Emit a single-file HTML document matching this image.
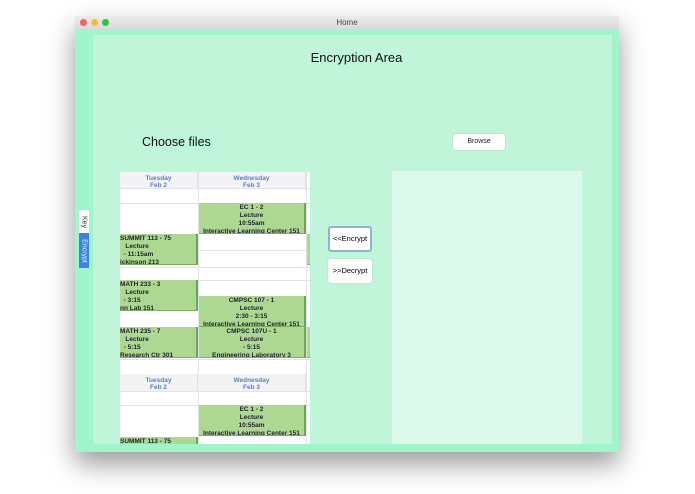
<!DOCTYPE html>
<html><head><style>
*{margin:0;padding:0;box-sizing:border-box}
body{width:695px;height:494px;background:#fff;position:relative;overflow:hidden;font-family:"Liberation Sans",sans-serif}
.a{position:absolute}
.ev{position:absolute;background:#acd891;border-right:2px solid #6aa84f;border-bottom:1px solid #7bb05f;font-size:6.5px;font-weight:bold;color:#223;text-align:center;line-height:8px;padding-top:1px;overflow:hidden;white-space:nowrap}
.hd{position:absolute;background:#f3f3f5;color:#5b7fc0;font-size:6.5px;font-weight:bold;text-align:center;line-height:7px;padding-top:3px;border-right:1px solid #dde}
.ln{position:absolute;height:1px;background:#e2e2ea}
.rot{position:absolute;left:50%;top:50%;transform:translate(-50%,-50%) rotate(90deg);font-size:7px;white-space:nowrap}
</style></head><body>
<div class="a" style="left:75px;top:16px;width:544px;height:436px;box-shadow:0 12px 25px rgba(0,0,0,.4);background:#a0f5cc"></div>
<div class="a" style="left:75px;top:16px;width:544px;height:14px;background:linear-gradient(#ececec,#d8d8d8);font-size:8px;color:#444;text-align:center;line-height:14px">Home</div>
<div class="a" style="left:80px;top:19px;width:7px;height:7px;border-radius:50%;background:#fc5f57"></div>
<div class="a" style="left:91px;top:19px;width:7px;height:7px;border-radius:50%;background:#fdbc2e"></div>
<div class="a" style="left:102px;top:19px;width:7px;height:7px;border-radius:50%;background:#28c840"></div>
<div class="a" style="left:93px;top:35px;width:519px;height:409px;background:#c0f5da"></div>
<div class="a" style="left:79px;top:210px;width:10px;height:23px;background:#fff;border-radius:2px 2px 0 0"><div class="rot" style="color:#333">Key</div></div>
<div class="a" style="left:79px;top:233px;width:10px;height:35px;background:#3b82e8"><div class="rot" style="color:#e8f0ff">Encrypt</div></div>
<div class="a" style="left:93px;top:50px;width:527px;text-align:center;font-size:13px;color:#111">Encryption Area</div>
<div class="a" style="left:142px;top:135px;font-size:12.5px;color:#111">Choose files</div>
<div class="a" style="left:453px;top:134px;width:52px;height:16px;background:#fff;border-radius:3px;box-shadow:0 0 1px #999;font-size:7px;text-align:center;line-height:16px;color:#222">Browse</div>
<div class="a" style="left:392px;top:171px;width:190px;height:273px;background:#dcf8ea"></div>
<div class="a" style="left:328px;top:226px;width:44px;height:26px;background:#fff;border:2px solid #8fb0d8;border-radius:3px;font-size:7.5px;text-align:center;line-height:22px">&lt;&lt;Encrypt</div>
<div class="a" style="left:328px;top:259px;width:44px;height:24px;background:#fff;border-radius:3px;box-shadow:0 0 1px #aaa;font-size:7.5px;text-align:center;line-height:24px">&gt;&gt;Decrypt</div>
<div class="a" style="left:120px;top:172px;width:190px;height:272px;background:#fff;overflow:hidden">
<div class="hd" style="left:0;top:0;width:78px;height:16px">Tuesday<br>Feb 2</div>
<div class="hd" style="left:78px;top:0;width:108px;height:16px">Wednesday<br>Feb 3</div>
<div class="ln" style="left:0;top:16px;width:190px"></div>
<div class="ln" style="left:0;top:31px;width:190px"></div>
<div class="ln" style="left:0;top:78px;width:190px"></div>
<div class="ln" style="left:0;top:95px;width:190px"></div>
<div class="ln" style="left:0;top:108px;width:190px"></div>
<div class="ln" style="left:0;top:187px;width:190px"></div>
<div class="a" style="left:78px;top:0;width:1px;height:272px;background:#e2e2ea"></div>
<div class="a" style="left:186px;top:0;width:1px;height:272px;background:#e2e2ea"></div>
<div class="ev" style="left:79px;top:31px;width:107px;height:31px">EC 1 - 2<br>Lecture<br>10:55am<br>Interactive Learning Center 151</div>
<div class="ev" style="left:0;top:62px;width:78px;height:31px;text-align:left">SUMMIT 113 - 75<br>&nbsp;&nbsp;&nbsp;Lecture<br>&nbsp; - 11:15am<br>ickinson 213</div>
<div class="ev" style="left:0;top:108px;width:78px;height:31px;text-align:left">MATH 233 - 3<br>&nbsp;&nbsp;&nbsp;Lecture<br>&nbsp; - 3:15<br>nn Lab 151</div>
<div class="ev" style="left:79px;top:124px;width:107px;height:31px">CMPSC 107 - 1<br>Lecture<br>2:30 - 3:15<br>Interactive Learning Center 151</div>
<div class="ev" style="left:0;top:155px;width:78px;height:31px;text-align:left">MATH 235 - 7<br>&nbsp;&nbsp;&nbsp;Lecture<br>&nbsp; - 5:15<br>Research Ctr 301</div>
<div class="ev" style="left:79px;top:155px;width:107px;height:31px">CMPSC 107U - 1<br>Lecture<br>- 5:15<br>Engineering Laboratory 3</div>
<div class="ev" style="left:187px;top:62px;width:5px;height:31px"></div>
<div class="ev" style="left:187px;top:155px;width:5px;height:31px"></div>
<div class="hd" style="left:0;top:202px;width:78px;height:17px">Tuesday<br>Feb 2</div>
<div class="hd" style="left:78px;top:202px;width:108px;height:17px">Wednesday<br>Feb 3</div>
<div class="ln" style="left:0;top:219px;width:190px"></div>
<div class="ln" style="left:0;top:233px;width:190px"></div>
<div class="ev" style="left:79px;top:233px;width:107px;height:31px">EC 1 - 2<br>Lecture<br>10:55am<br>Interactive Learning Center 151</div>
<div class="ev" style="left:0;top:265px;width:78px;height:10px;text-align:left">SUMMIT 113 - 75</div>
</div>
</body></html>
